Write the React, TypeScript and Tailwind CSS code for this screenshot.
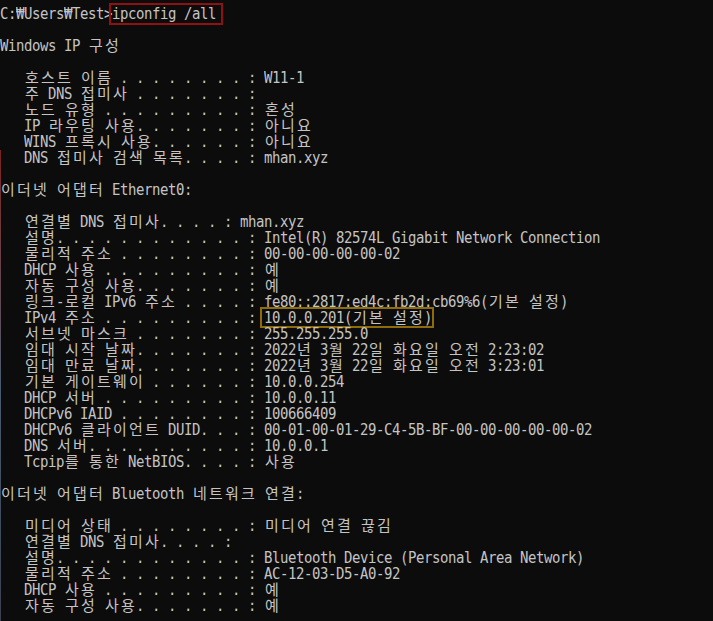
import React from "react";

type Part = string | { t: string; box: "red" | "gold" };

const isWide = (ch: string) => {
  const c = ch.codePointAt(0) ?? 0;
  return (c >= 0x1100 && c <= 0x11ff) || (c >= 0x3130 && c <= 0x318f) || (c >= 0xac00 && c <= 0xd7a3);
};

// one console cell per char: 8px for latin, 16px for hangul
const Cells = ({ text }: { text: string }) => (
  <>
    {Array.from(text).map((ch, i) => (
      <span
        key={i}
        className={
          isWide(ch)
            ? "inline-block w-4 text-center text-[15px]"
            : "inline-block w-2 scale-y-[1.08]"
        }
      >
        {ch === " " ? "\u00a0" : ch}
      </span>
    ))}
  </>
);

const lines: Part[][] = [
  ["C:₩Users₩Test>", { t: "ipconfig /all", box: "red" }],
  [""],
  ["Windows IP 구성"],
  [""],
  ["   호스트 이름 . . . . . . . . : W11-1"],
  ["   주 DNS 접미사 . . . . . . . :"],
  ["   노드 유형 . . . . . . . . . : 혼성"],
  ["   IP 라우팅 사용. . . . . . . : 아니요"],
  ["   WINS 프록시 사용. . . . . . : 아니요"],
  ["   DNS 접미사 검색 목록. . . . : mhan.xyz"],
  [""],
  ["이더넷 어댑터 Ethernet0:"],
  [""],
  ["   연결별 DNS 접미사. . . . : mhan.xyz"],
  ["   설명. . . . . . . . . . . . : Intel(R) 82574L Gigabit Network Connection"],
  ["   물리적 주소 . . . . . . . . : 00-00-00-00-00-02"],
  ["   DHCP 사용 . . . . . . . . . : 예"],
  ["   자동 구성 사용. . . . . . . : 예"],
  ["   링크-로컬 IPv6 주소 . . . . : fe80::2817:ed4c:fb2d:cb69%6(기본 설정)"],
  ["   IPv4 주소 . . . . . . . . . : ", { t: "10.0.0.201(기본 설정)", box: "gold" }],
  ["   서브넷 마스크 . . . . . . . : 255.255.255.0"],
  ["   임대 시작 날짜. . . . . . . : 2022년 3월 22일 화요일 오전 2:23:02"],
  ["   임대 만료 날짜. . . . . . . : 2022년 3월 22일 화요일 오전 3:23:01"],
  ["   기본 게이트웨이 . . . . . . : 10.0.0.254"],
  ["   DHCP 서버 . . . . . . . . . : 10.0.0.11"],
  ["   DHCPv6 IAID . . . . . . . . : 100666409"],
  ["   DHCPv6 클라이언트 DUID. . . : 00-01-00-01-29-C4-5B-BF-00-00-00-00-00-02"],
  ["   DNS 서버. . . . . . . . . . : 10.0.0.1"],
  ["   Tcpip를 통한 NetBIOS. . . . : 사용"],
  [""],
  ["이더넷 어댑터 Bluetooth 네트워크 연결:"],
  [""],
  ["   미디어 상태 . . . . . . . . : 미디어 연결 끊김"],
  ["   연결별 DNS 접미사. . . . :"],
  ["   설명. . . . . . . . . . . . : Bluetooth Device (Personal Area Network)"],
  ["   물리적 주소 . . . . . . . . : AC-12-03-D5-A0-92"],
  ["   DHCP 사용 . . . . . . . . . : 예"],
  ["   자동 구성 사용. . . . . . . : 예"],
];

const App = () => {
  return (
    <div className="relative min-h-screen w-full overflow-hidden bg-[#0c0c0c] pt-[6px] text-[14px] text-[#c4c4c4] font-['DejaVu_Sans_Mono','Noto_Sans_CJK_KR',monospace]">
      {/* window edge behind the console */}
      <div className="absolute left-0 top-[150px] bottom-0 w-px bg-gradient-to-b from-[#7a2020] via-[#4a5a70] to-[#3a4250]" />
      {lines.map((parts, i) => (
        <div key={i} className="flex h-4 leading-4 whitespace-pre">
          {parts.map((p, j) =>
            typeof p === "string" ? (
              <Cells key={j} text={p} />
            ) : (
              <span key={j} className="relative flex">
                <Cells text={p.t} />
                {p.box === "red" ? (
                  <span className="absolute -left-[3px] -right-[7px] -top-[3px] -bottom-[3px] border-2 border-[#8e1214]" />
                ) : (
                  <span className="absolute -left-[4px] -right-[2px] -top-[3px] -bottom-[2px] border-2 border-[#8f6c0a]" />
                )}
              </span>
            )
          )}
        </div>
      ))}
    </div>
  );
};

export default App;
